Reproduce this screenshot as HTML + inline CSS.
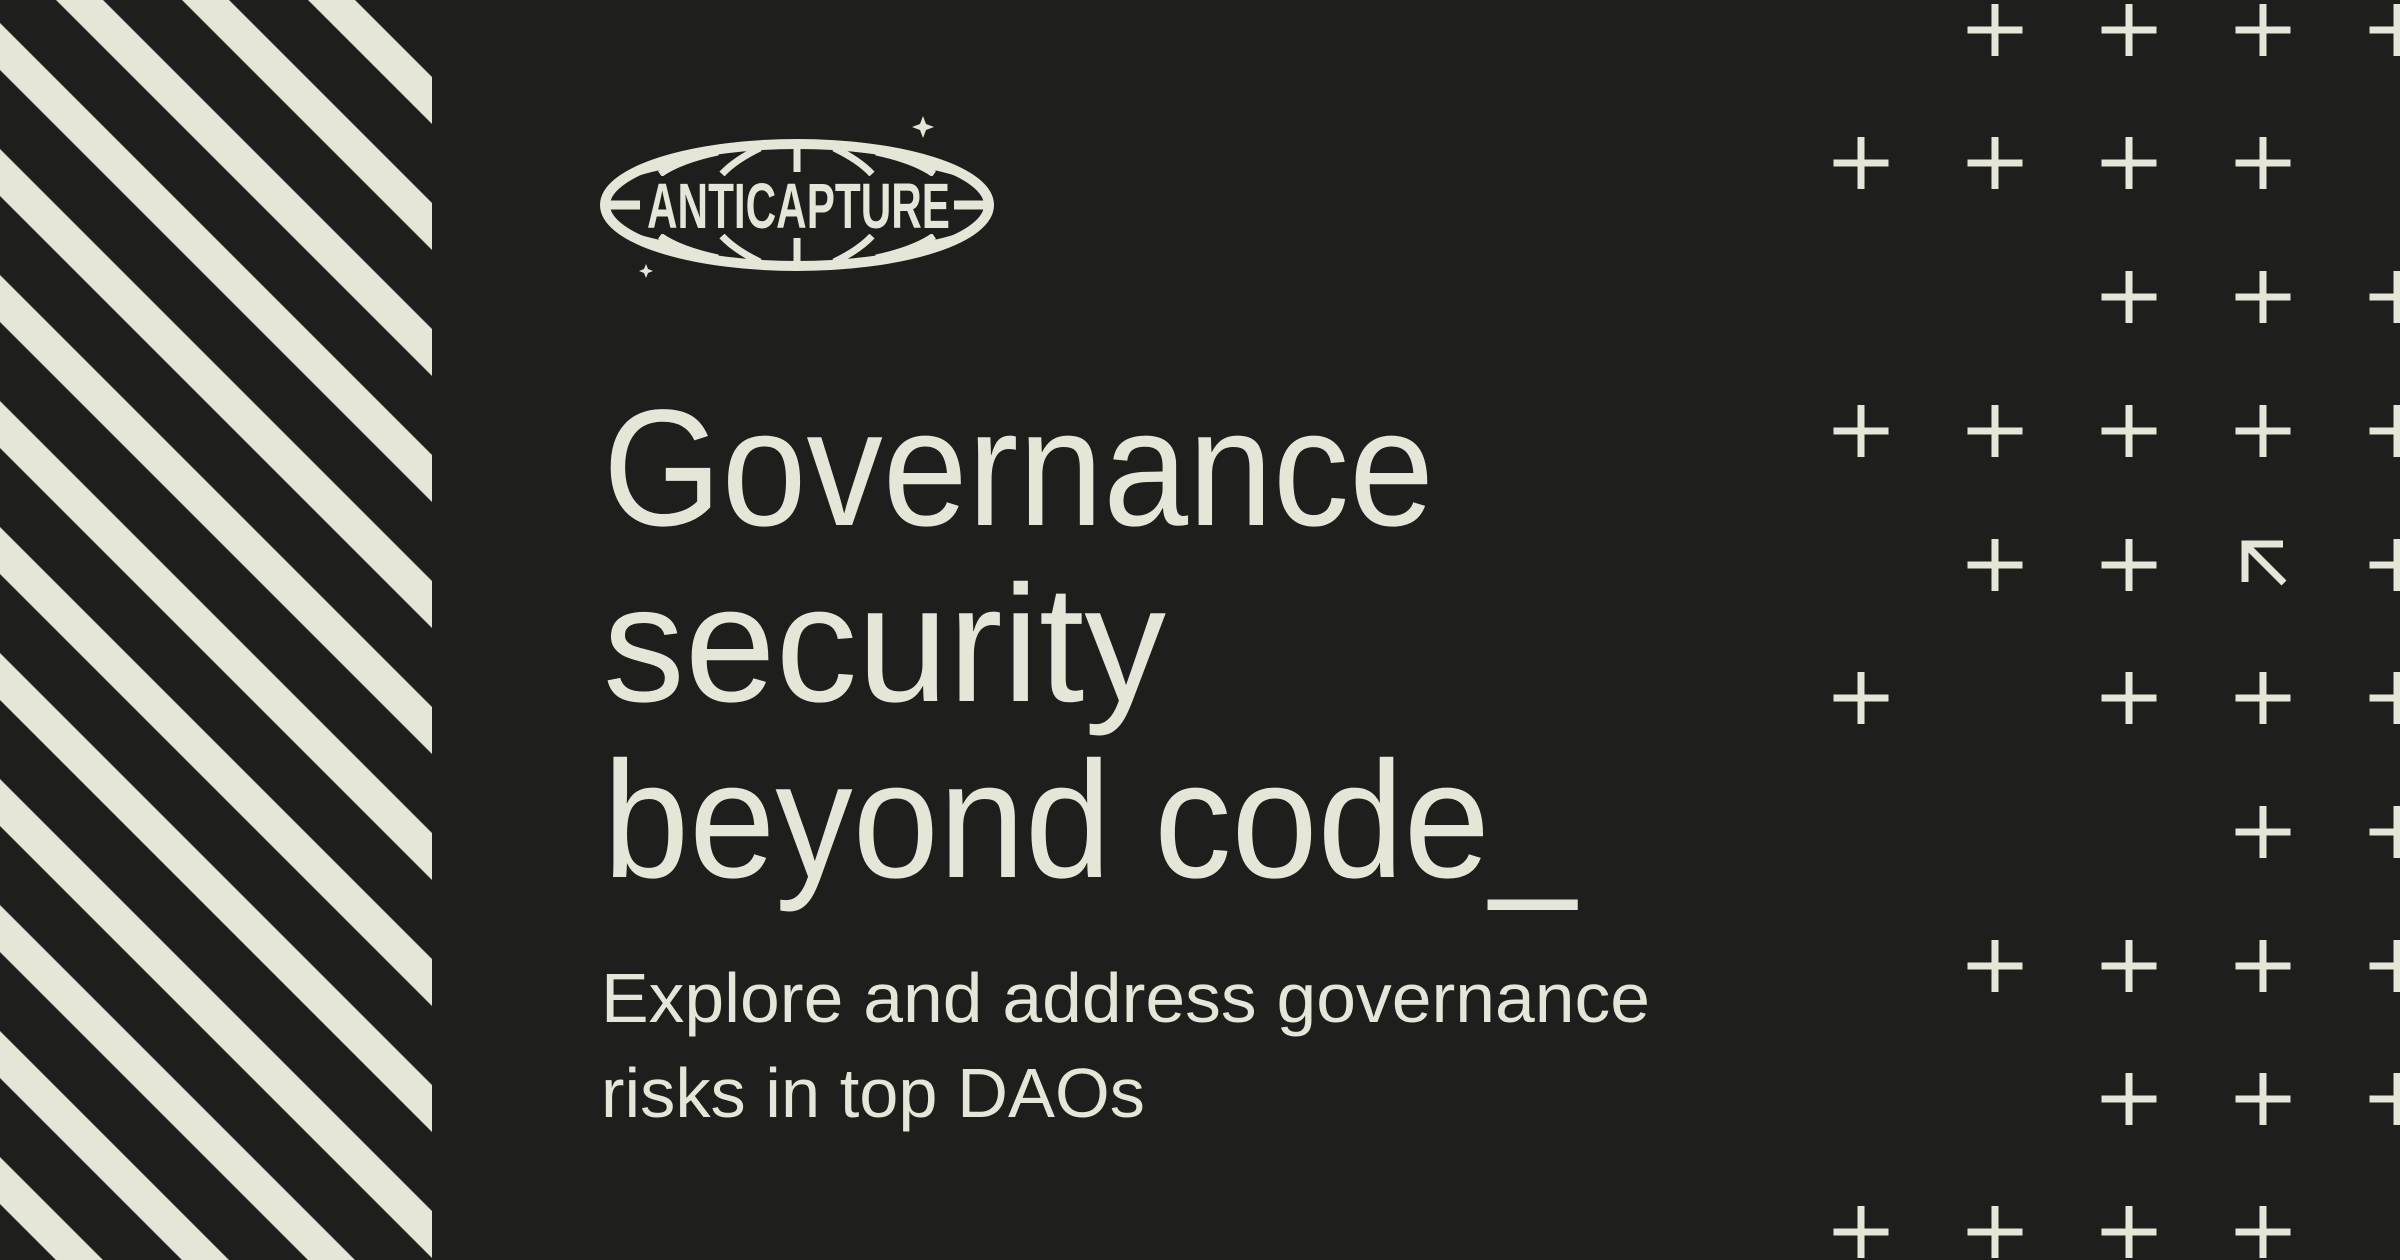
<!DOCTYPE html>
<html><head><meta charset="utf-8"><style>
html,body{margin:0;padding:0;background:#1e1e1c;width:2400px;height:1260px;overflow:hidden;}
svg{display:block}
</style></head><body>
<svg width="2400" height="1260" viewBox="0 0 2400 1260" xmlns="http://www.w3.org/2000/svg">
<defs>
<pattern id="st" patternUnits="userSpaceOnUse" width="89.1" height="89.1" patternTransform="rotate(45)">
<rect x="0" y="16.26" width="89.1" height="33.23" fill="#e5e6d8"/>
</pattern>
<g id="p"><rect x="-27.5" y="-3.5" width="55" height="7"/><rect x="-3.5" y="-26" width="7" height="52"/></g>
</defs>
<rect width="2400" height="1260" fill="#1e1e1c"/>
<rect x="0" y="0" width="432" height="1260" fill="url(#st)"/>
<g fill="none" stroke="#e5e6d8">
<ellipse cx="797" cy="205" rx="192" ry="61" stroke-width="10"/>
<g stroke-width="7">
<line x1="797" y1="144" x2="797" y2="172"/><line x1="797" y1="238" x2="797" y2="266"/>
<path d="M760 148 Q735 160 722 174"/><path d="M834 148 Q859 160 872 174"/>
<path d="M760 262 Q735 250 722 236"/><path d="M834 262 Q859 250 872 236"/>
<path d="M718 152 Q680 160 660 174"/><path d="M876 152 Q914 160 934 174"/>
<path d="M718 258 Q680 250 660 236"/><path d="M876 258 Q914 250 934 236"/>
<path d="M672 164 Q640 170 622 178"/><path d="M922 164 Q954 170 972 178"/>
<path d="M672 246 Q640 240 622 232"/><path d="M922 246 Q954 240 972 232"/>
</g>
<line x1="610" y1="205" x2="640" y2="205" stroke-width="9"/>
<line x1="954" y1="205" x2="984" y2="205" stroke-width="9"/>
</g>
<rect x="640" y="176" width="314" height="58" fill="#1e1e1c"/>
<text x="647" y="228" fill="#e5e6d8" font-family="Liberation Sans Narrow, Liberation Sans, sans-serif" font-weight="bold" font-size="64" textLength="303" lengthAdjust="spacingAndGlyphs">ANTICAPTURE</text>
<path d="M923 116 L926 124 L934 127 L926 130 L923 138 L920 130 L912 127 L920 124Z" fill="#e5e6d8"/>
<path d="M646 264 L648 269 L653 271 L648 273 L646 278 L644 273 L639 271 L644 269Z" fill="#e5e6d8"/>
<g fill="#e5e6d8" font-family="Liberation Sans, sans-serif" font-size="166">
<text x="603" y="525" textLength="831" lengthAdjust="spacingAndGlyphs">Governance</text>
<text x="603" y="701" textLength="563" lengthAdjust="spacingAndGlyphs">security</text>
<text x="603" y="877" textLength="973" lengthAdjust="spacingAndGlyphs">beyond code_</text>
</g>
<g fill="#e5e6d8" font-family="Liberation Sans, sans-serif" font-size="70">
<text x="601" y="1022" textLength="1049" lengthAdjust="spacingAndGlyphs">Explore and address governance</text>
<text x="601" y="1117" textLength="544" lengthAdjust="spacingAndGlyphs">risks in top DAOs</text>
</g>
<g fill="#e5e6d8">
<use href="#p" x="1995" y="30"/><use href="#p" x="2129" y="30"/><use href="#p" x="2263" y="30"/><use href="#p" x="2397" y="30"/>
<use href="#p" x="1861" y="163"/><use href="#p" x="1995" y="163"/><use href="#p" x="2129" y="163"/><use href="#p" x="2263" y="163"/>
<use href="#p" x="2129" y="297"/><use href="#p" x="2263" y="297"/><use href="#p" x="2397" y="297"/>
<use href="#p" x="1861" y="431"/><use href="#p" x="1995" y="431"/><use href="#p" x="2129" y="431"/><use href="#p" x="2263" y="431"/><use href="#p" x="2397" y="431"/>
<use href="#p" x="1995" y="565"/><use href="#p" x="2129" y="565"/><use href="#p" x="2397" y="565"/>
<use href="#p" x="1861" y="698"/><use href="#p" x="2129" y="698"/><use href="#p" x="2263" y="698"/><use href="#p" x="2397" y="698"/>
<use href="#p" x="2263" y="832"/><use href="#p" x="2397" y="832"/>
<use href="#p" x="1995" y="966"/><use href="#p" x="2129" y="966"/><use href="#p" x="2263" y="966"/><use href="#p" x="2397" y="966"/>
<use href="#p" x="2129" y="1099"/><use href="#p" x="2263" y="1099"/><use href="#p" x="2397" y="1099"/>
<use href="#p" x="1861" y="1232"/><use href="#p" x="1995" y="1232"/><use href="#p" x="2129" y="1232"/><use href="#p" x="2263" y="1232"/>
</g>
<g stroke="#e5e6d8" stroke-width="7" fill="none">
<path d="M2245 582 L2245 544 L2283 544"/>
<line x1="2246" y1="545" x2="2284" y2="583"/>
</g>
</svg>
</body></html>
